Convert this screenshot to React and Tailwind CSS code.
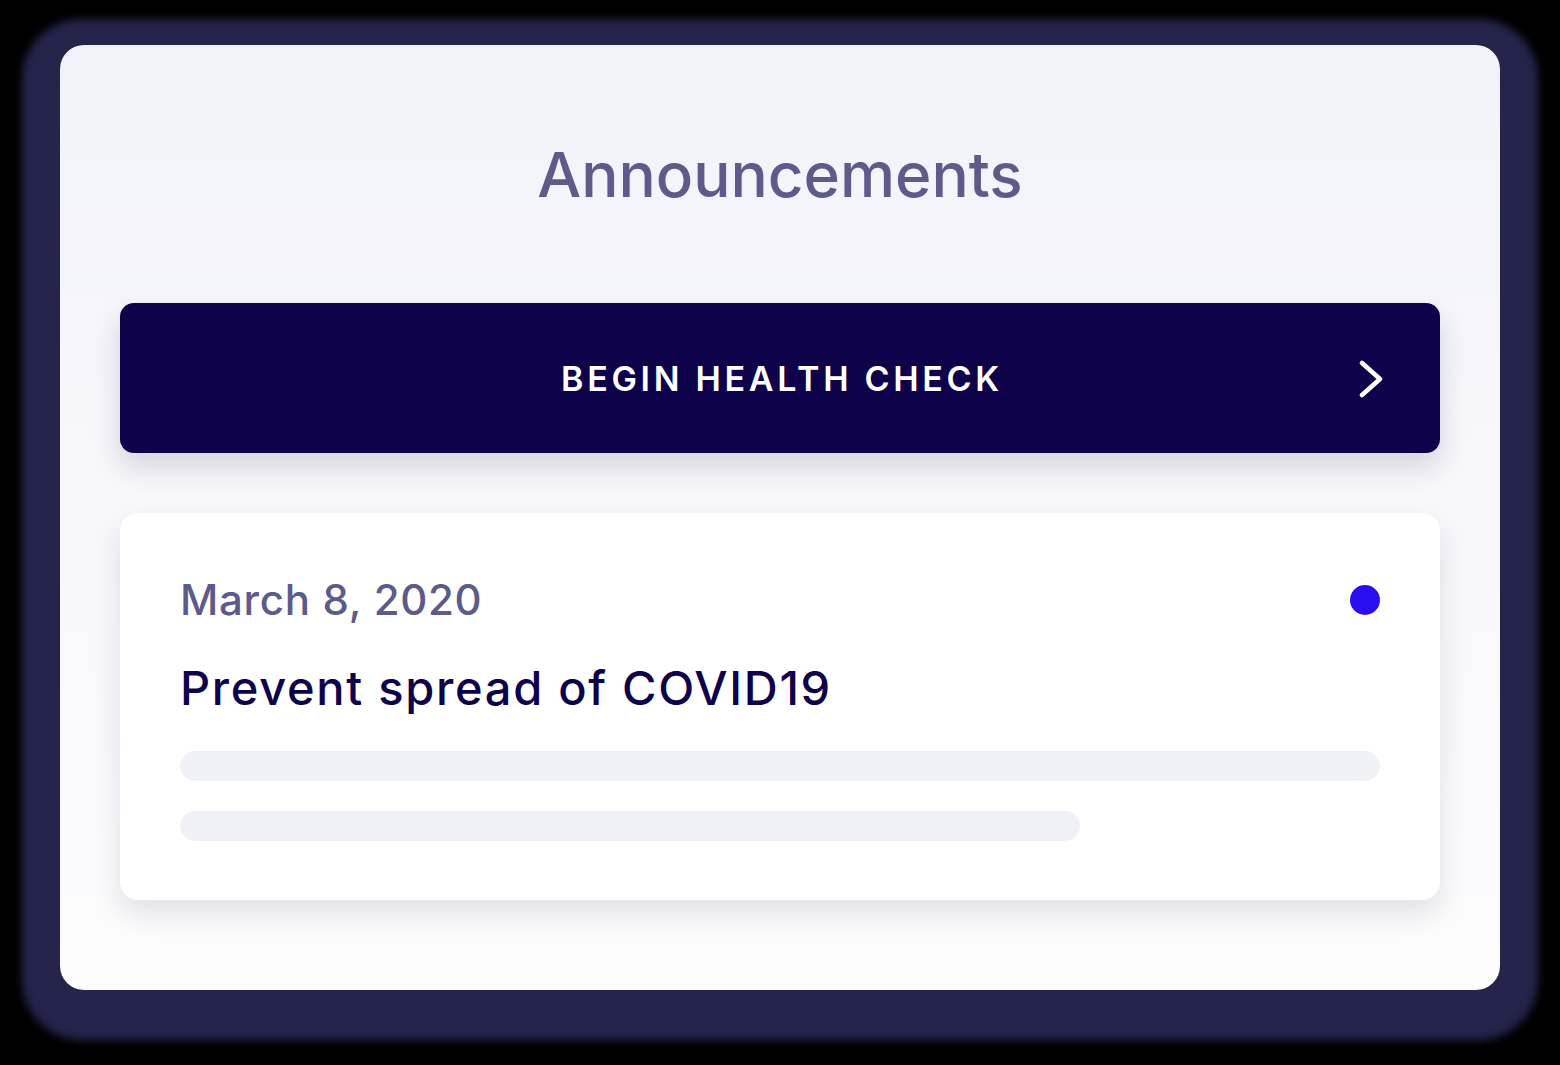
export default function App() {
  return (
    <div className="w-[1560px] h-[1065px] bg-black pt-[45px] pl-[60px] overflow-hidden" style={{ fontFamily: "Inter, 'Noto Sans', sans-serif" }}>
      <div className="w-[1440px] h-[945px] rounded-[24px] bg-gradient-to-b from-[#f2f2fa] to-[#fdfdfe] shadow-[0_12px_8px_38px_#25254c] px-[60px] pt-[91px] flex flex-col">
        <h1 className="text-center text-[62px] leading-[78px] font-medium text-[#5d5b8a]">Announcements</h1>
        <button className="mt-[89px] h-[150px] w-full rounded-[14px] bg-[#0e034a] shadow-[0_14px_28px_rgba(30,30,60,0.16)] flex items-center relative">
          <span className="flex-1 text-center text-white text-[34px] font-semibold tracking-[3.7px] pl-[4px]">BEGIN HEALTH CHECK</span>
          <svg className="absolute right-[54px] top-[57px]" width="28" height="38" viewBox="0 0 28 38" fill="none">
            <path d="M4 3 L22 19 L4 35" stroke="white" strokeWidth="4.5" strokeLinecap="round" strokeLinejoin="round" />
          </svg>
        </button>
        <div className="mt-[60px] h-[387px] rounded-[18px] bg-white shadow-[0_14px_30px_rgba(30,30,60,0.12)] px-[60px] pt-[62px]">
          <div className="flex items-center justify-between">
            <span className="text-[42px] leading-[50px] font-medium text-[#5d5b8a] tracking-[0.7px]">March 8, 2020</span>
            <span className="w-[30px] h-[30px] rounded-full bg-[#2a0ef2]"></span>
          </div>
          <div className="mt-[36px] text-[47px] leading-[54px] font-medium text-[#0e034a] tracking-[1.7px]">Prevent spread of COVID19</div>
          <div className="mt-[36px] h-[30px] w-full rounded-full bg-[#f0f1f6]"></div>
          <div className="mt-[30px] h-[30px] w-[900px] rounded-full bg-[#f0f1f6]"></div>
        </div>
      </div>
    </div>
  );
}
